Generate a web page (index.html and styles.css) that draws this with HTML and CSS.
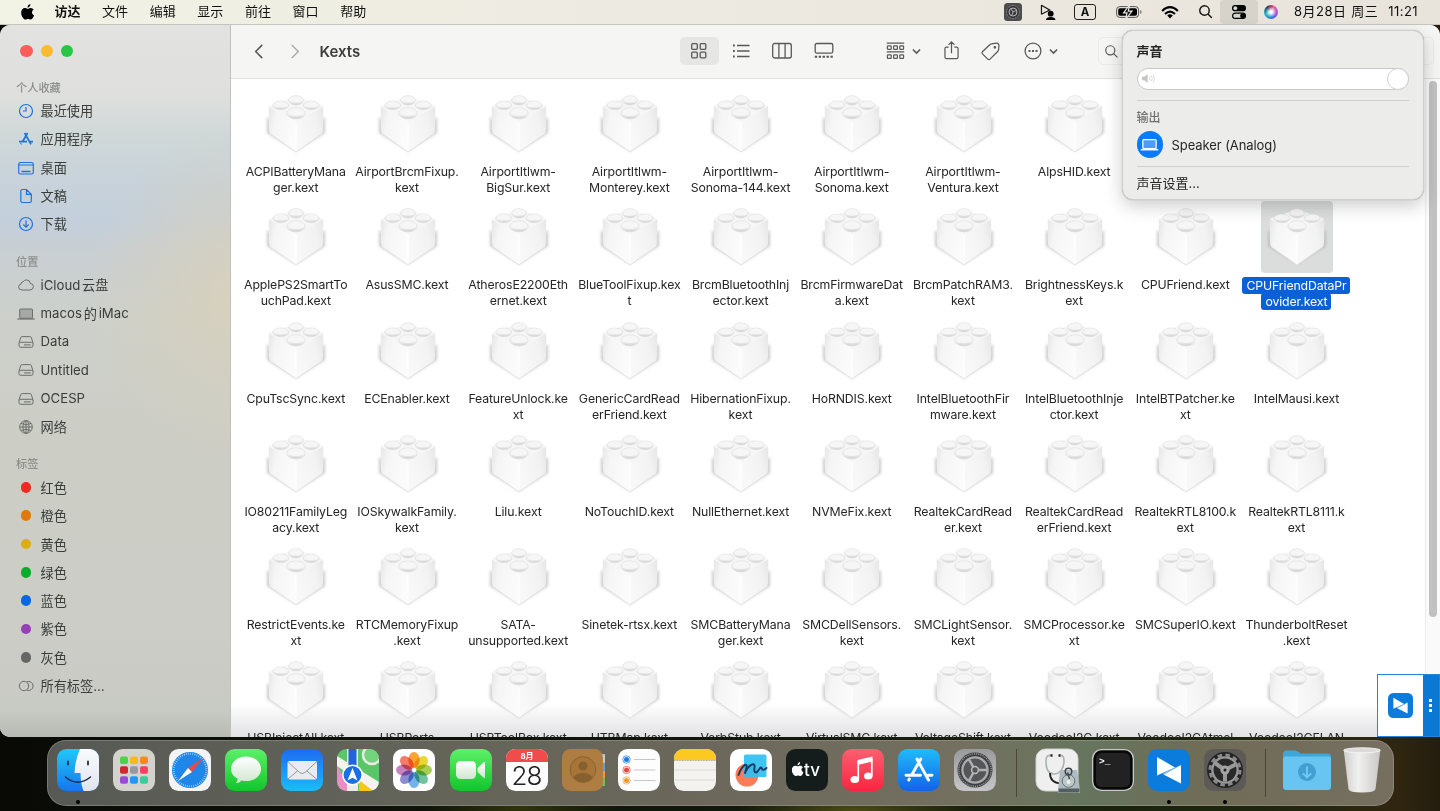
FILE: index.html
```html
<!DOCTYPE html>
<html lang="zh-CN">
<head>
<meta charset="utf-8">
<title>Kexts</title>
<link rel="stylesheet" href="styles.css">
</head>
<body>
<svg class="defs" width="0" height="0">
  <defs>
    <linearGradient id="bl" x1="0" x2="1" y2=".3"><stop offset="0" stop-color="#e6e6e6"/><stop offset=".3" stop-color="#f5f5f5"/><stop offset="1" stop-color="#fbfbfb"/></linearGradient>
    <linearGradient id="br" x1="1" x2="0" y2=".4"><stop offset="0" stop-color="#e6e6e6"/><stop offset=".35" stop-color="#f2f2f2"/><stop offset="1" stop-color="#f8f8f8"/></linearGradient>
    <linearGradient id="st" x2="0" y2="1"><stop offset="0" stop-color="#f4f4f4"/><stop offset=".6" stop-color="#f2f2f2"/><stop offset="1" stop-color="#cfcfcf"/></linearGradient>
    <filter id="soft" x="-20%" y="-20%" width="140%" height="140%"><feGaussianBlur stdDeviation="1.5"/></filter>
    <linearGradient id="gGreen" x2="0" y2="1"><stop offset="0" stop-color="#5df069"/><stop offset="1" stop-color="#12c52b"/></linearGradient>
    <linearGradient id="gBlue" x2="0" y2="1"><stop offset="0" stop-color="#1d6bf2"/><stop offset="1" stop-color="#1cbcf8"/></linearGradient>
    <linearGradient id="gStore" x2="0" y2="1"><stop offset="0" stop-color="#1fbcfb"/><stop offset="1" stop-color="#1263e8"/></linearGradient>
    <linearGradient id="gFind" x2="0" y2="1"><stop offset="0" stop-color="#1fc8fb"/><stop offset="1" stop-color="#1577ef"/></linearGradient>
    <linearGradient id="gFace" x2="0" y2="1"><stop offset="0" stop-color="#fbfbfd"/><stop offset="1" stop-color="#dfe4ee"/></linearGradient>
    <linearGradient id="gWhite" x2="0" y2="1"><stop offset="0" stop-color="#fff"/><stop offset="1" stop-color="#cfe6cf"/></linearGradient>
    <linearGradient id="gRed" x2="0" y2="1"><stop offset="0" stop-color="#fb5f71"/><stop offset="1" stop-color="#fa2540"/></linearGradient>
    <linearGradient id="gGrey" x2="0" y2="1"><stop offset="0" stop-color="#9a9a9c"/><stop offset="1" stop-color="#c6c6c8"/></linearGradient>
    <linearGradient id="gTrash"><stop offset="0" stop-color="#cfcfcd"/><stop offset=".4" stop-color="#f0f0ef"/><stop offset="1" stop-color="#c9c8c6"/></linearGradient>
    <clipPath id="tile"><rect width="42" height="42" rx="9.500"/></clipPath>
    <symbol id="brick" viewBox="-4 -4 64 66">
      <path d="M-1 22L28 42 57 22V38L28 56 -1 38Z" fill="#aaa" filter="url(#soft)" opacity=".6"/>
      <path d="M1 11.500Q1 10.500 2.500 10L28 1.500 53.500 10Q55 10.500 55 11.500L28 27Z" fill="#f6f6f6"/>
      <path d="M.8 11.500L28 26V57Q27 56.500 3 39.500Q1 38 .8 33Z" fill="url(#bl)"/>
      <path d="M55.200 11.500L28 26V57Q29 56.500 53 39.500Q55 38 55.200 33Z" fill="url(#br)"/>
      <path d="M28 27V55" stroke="#fff" stroke-width="1.400" opacity=".9"/>
      <path d="M3 39.500L28 57 53 39.500" fill="none" stroke="#dcdcdc" stroke-width=".8"/>
      <g fill="url(#st)" stroke="#dadada" stroke-width=".6"><ellipse cx="28" cy="5.300" rx="7.400" ry="4.600"/><ellipse cx="12.800" cy="10.300" rx="8" ry="4.300"/><ellipse cx="43.200" cy="10.300" rx="8" ry="4.300"/><ellipse cx="28" cy="18.300" rx="9.200" ry="5.500"/></g>
      <g fill="#f6f6f6"><ellipse cx="28" cy="4.400" rx="6.300" ry="3.200"/><ellipse cx="12.800" cy="9.400" rx="6.700" ry="2.900"/><ellipse cx="43.200" cy="9.400" rx="6.700" ry="2.900"/><ellipse cx="28" cy="17.200" rx="7.800" ry="3.800"/></g>
    </symbol>
    <symbol id="disk" viewBox="0 0 16 16"><path d="M4.200 2.600H11.800Q13 2.600 13.300 3.600L15 9V11.600Q15 13.300 13.400 13.300H2.600Q1 13.300 1 11.600V9L2.700 3.600Q3 2.600 4.200 2.600ZM1.200 9.200Q1.500 8.300 2.600 8.300H13.400Q14.500 8.300 14.800 9.200M6 10.900H12.700"/></symbol>
    <symbol id="apple" viewBox="0 0 14 17"><path d="M9.800 0C10 1.900 8.500 3.800 6.800 3.900 6.600 2.100 8.100.3 9.800 0ZM10 4.200C11.400 4.200 12.600 5 13.200 6 10.700 7.400 11.100 10.900 13.800 12 13.200 13.700 11.700 16.500 10.100 16.500 9 16.500 8.600 15.900 7.400 15.900S5.700 16.500 4.600 16.500C2.400 16.500 0 12.500 0 9.200 0 6.100 1.900 4.200 4 4.200 5.300 4.200 6.400 5 7.200 5S8.900 4.200 10 4.200Z"/></symbol>
    <symbol id="mag" viewBox="0 0 14 14"><circle cx="5.700" cy="5.700" r="4.900"/><path d="M9.300 9.300L13.400 13.400"/></symbol>
    <symbol id="chev" viewBox="0 0 8 6"><path d="M.8 1.200L4 4.400 7.200 1.200"/></symbol>
    <symbol id="todesk" viewBox="0 0 42 42"><rect width="42" height="42" rx="9" fill="#0b7bdc"/><path d="M9 8L27 18.500 9 26.500Z" fill="#fff"/><path d="M33 16V34.500L15.500 25.500Z" fill="#fff"/><path d="M15.500 25.500L33 16.200 27 18.500 15 24Z" fill="#8abcf0"/></symbol>
  </defs>
</svg>

<header class="menubar">
  <svg class="m-apple"><use href="#apple"/></svg>
  <nav class="menus"><b>访达</b><span>文件</span><span>编辑</span><span>显示</span><span>前往</span><span>窗口</span><span>帮助</span></nav>
  <div class="status">
    <svg class="s-app" viewBox="0 0 18 18"><rect width="18" height="18" rx="3.500" fill="#4d4d4f"/><circle cx="9" cy="9" r="6.500" fill="#3a3a3c" stroke="#8b8b8e" stroke-dasharray="1 .7"/><circle cx="9" cy="9" r="4" fill="none" stroke="#b5b5b5"/><path d="M9 9L12 7.500M9 9L7 6M9 9L8 12" stroke="#aaa"/></svg>
    <svg class="s-share" viewBox="0 0 17 17"><path d="M1.500 1V10.500M1.500 1.200L10 6.200 1.500 10.500" fill="none" stroke="#111" stroke-width="1.200"/><circle cx="11" cy="10" r="3"/><path d="M6 16.500Q6.500 13.400 11 13.400T16 16.500ZM14.500 7.500L16 6"/></svg>
    <span class="s-input">A</span>
    <svg class="s-batt" viewBox="0 0 26 14"><rect x=".6" y="1.600" width="22" height="10.800" rx="3.200" fill="none" stroke="#555" stroke-width="1"/><rect x="2.200" y="3.200" width="18.800" height="7.600" rx="1.800"/><path d="M24.300 5V9Q25.600 8.500 25.600 7T24.300 5Z" fill="#666"/><path d="M13.500 0L7.500 7.800H11L9.800 14 16 6.200H12.300Z" fill="#111" stroke="#ece9e0" stroke-width="1.200"/></svg>
    <svg class="s-wifi" viewBox="0 0 18 13"><g fill="none" stroke="#000" stroke-width="2"><path d="M1.100 4.900Q9-2.600 16.900 4.900M4 8Q9 3.200 14 8"/></g><path d="M6.200 9.500Q9 7.200 11.800 9.500L9 12.500Z"/></svg>
    <svg class="s-mag"><use href="#mag"/></svg>
    <span class="s-cc"><svg viewBox="0 0 14 14"><rect width="14" height="6.300" rx="3.150"/><circle cx="3.300" cy="3.150" r="1.900" fill="#dcd9d1"/><rect x=".6" y="8.100" width="12.800" height="5.300" rx="2.650" fill="none" stroke="#000" stroke-width="1.200"/><circle cx="10.800" cy="10.750" r="2.600"/></svg></span>
    <span class="s-siri"></span>
    <span class="clock">8月28日 周三&nbsp; 11:21</span>
  </div>
</header>

<main class="window">
  <aside class="sidebar">
    <div class="lights"><i></i><i></i><i></i></div>
    <h2>个人收藏</h2>
    <ul class="blue">
      <li><svg viewBox="0 0 16 16"><circle cx="8" cy="8" r="6.500"/><path d="M8 4V8H4.800"/></svg>最近使用</li>
      <li><svg viewBox="0 0 16 16"><path stroke-width="1.700" d="M9.600 2L4.300 11M6.600 2L13 13.400M1 10.700H9M11.800 10.700H15M2.800 13.300L3.300 12.500"/></svg>应用程序</li>
      <li><svg viewBox="0 0 16 16"><rect x=".7" y="2.500" width="14.600" height="11.500" rx="1.800"/><path d="M.7 5H15.300"/><path stroke-width="1.700" d="M3.500 11.500H12.500"/></svg>桌面</li>
      <li><svg viewBox="0 0 16 16"><path d="M4.300 1.500H8.500L13.300 6.300V13Q13.300 14.500 11.800 14.500H4.300Q2.800 14.500 2.800 13V3Q2.800 1.500 4.300 1.500ZM8.500 1.700V6.300H13"/></svg>文稿</li>
      <li><svg viewBox="0 0 16 16"><circle cx="8" cy="8" r="6.500"/><path d="M8 4.300V11M5.300 8.500L8 11.200 10.700 8.500"/></svg>下载</li>
    </ul>
    <h2>位置</h2>
    <ul>
      <li><svg viewBox="0 0 16 16"><path d="M4 13Q.5 12.800.6 9.800.8 7.400 3 7.100 3 4.900 5.100 4.900 6.300 2.800 8.700 2.900 12 3.200 12.200 6.300 15.300 6.600 15.400 9.700 15.200 12.800 12 13Z"/></svg>iCloud<span class="cj">云盘</span></li>
      <li><svg class="lap" viewBox="0 0 18 16"><rect x="2.700" y="3" width="12.800" height="9.300" rx="1" fill="#a5a8a4"/><path stroke-width="1.200" d="M.3 13H17.700"/></svg>macos<span class="cj">的</span><span class="cj">iMac</span></li>
      <li><svg><use href="#disk"/></svg>Data</li>
      <li><svg><use href="#disk"/></svg>Untitled</li>
      <li><svg><use href="#disk"/></svg>OCESP</li>
      <li><svg viewBox="0 0 16 16"><circle cx="8" cy="8" r="6.300"/><ellipse cx="8" cy="8" rx="3" ry="6.300"/><path d="M1.700 8H14.300M8 1.700V14.300M3 4.500Q8 6.800 13 4.500M3 11.500Q8 9.200 13 11.500"/></svg>网络</li>
    </ul>
    <h2>标签</h2>
    <ul>
      <li><i class="dot red"></i>红色</li>
      <li><i class="dot orange"></i>橙色</li>
      <li><i class="dot yellow"></i>黄色</li>
      <li><i class="dot green"></i>绿色</li>
      <li><i class="dot azure"></i>蓝色</li>
      <li><i class="dot purple"></i>紫色</li>
      <li><i class="dot grey"></i>灰色</li>
      <li><svg viewBox="0 0 16 16"><circle cx="6" cy="8" r="4.700"/><path d="M9 3.800A4.500 4.500 0 1 1 9 12.200"/></svg>所有标签…</li>
    </ul>
  </aside>

  <section class="content">
    <div class="toolbar">
      <svg class="back" viewBox="0 0 10 16"><path d="M8.500 1L1.500 8 8.500 15"/></svg>
      <svg class="fwd" viewBox="0 0 10 16"><path d="M1.500 1L8.500 8 1.500 15"/></svg>
      <h1>Kexts</h1>
      <div class="views">
        <span class="on"><svg viewBox="0 0 20 20"><rect x="2.700" y="2.700" width="5.600" height="5.600" rx="1"/><rect x="11.200" y="2.700" width="5.600" height="5.600" rx="1"/><rect x="2.700" y="11.200" width="5.600" height="5.600" rx="1"/><rect x="11.200" y="11.200" width="5.600" height="5.600" rx="1"/></svg></span>
        <span><svg viewBox="0 0 20 20"><path d="M6 4.500H18.500M6 10H18.500M6 15.500H18.500"/><path stroke-width="1.800" d="M2 4.500H3.800M2 10H3.800M2 15.500H3.800"/></svg></span>
        <span><svg viewBox="0 0 20 20"><rect x=".7" y="2.500" width="18.600" height="14.500" rx="2"/><path d="M6.900 2.500V17M13.100 2.500V17"/></svg></span>
        <span><svg viewBox="0 0 20 20"><rect x="1.200" y="2.500" width="17.600" height="9.600" rx="1.500"/><path stroke-width="2" stroke-dasharray="2.400 1.500" d="M.8 15.700H19.200"/></svg></span>
      </div>
      <svg class="group" viewBox="0 0 20 20"><path d="M.8 1.300H19.200M.8 10.500H19.200"/><g><rect x="1.500" y="4" width="4" height="3.800" rx=".8"/><rect x="8" y="4" width="4" height="3.800" rx=".8"/><rect x="14.500" y="4" width="4" height="3.800" rx=".8"/><rect x="1.500" y="13.500" width="4" height="3.800" rx=".8"/><rect x="8" y="13.500" width="4" height="3.800" rx=".8"/><rect x="14.500" y="13.500" width="4" height="3.800" rx=".8"/></g></svg>
      <svg class="chev c1"><use href="#chev"/></svg>
      <svg class="share" viewBox="0 0 16 20"><path d="M5 6.500H2.500Q1 6.500 1 8V17Q1 18.700 2.600 18.700H13.400Q15 18.700 15 17V8Q15 6.500 13.500 6.500H11M8 13V1M4.800 4L8 .9 11.200 4"/></svg>
      <svg class="tag" viewBox="0 0 20 20"><path d="M11 2L16 1.200Q18.800 1 18.900 4L18.500 8Q18.400 9 17.800 9.700L9.500 18Q8.300 19.200 7.100 18L1.500 12.500Q.5 11.400 1.500 10.200L9.500 2.700Q10 2.100 11 2Z"/><circle cx="14.600" cy="5.600" r=".8"/></svg>
      <svg class="more" viewBox="0 0 18 18"><circle cx="9" cy="9" r="7.900"/><path stroke-width="2" stroke-dasharray="2 1.500" d="M4.500 9H14"/></svg>
      <svg class="chev c2"><use href="#chev"/></svg>
      <span class="search"><svg><use href="#mag"/></svg></span>
    </div>
    <div class="body">
      <div class="grid">
        <figure><svg><use href="#brick"/></svg><p>ACPIBatteryMana<br>ger.kext</p></figure>
        <figure><svg><use href="#brick"/></svg><p>AirportBrcmFixup.<br>kext</p></figure>
        <figure><svg><use href="#brick"/></svg><p>AirportItlwm-<br>BigSur.kext</p></figure>
        <figure><svg><use href="#brick"/></svg><p>AirportItlwm-<br>Monterey.kext</p></figure>
        <figure><svg><use href="#brick"/></svg><p>AirportItlwm-<br>Sonoma-144.kext</p></figure>
        <figure><svg><use href="#brick"/></svg><p>AirportItlwm-<br>Sonoma.kext</p></figure>
        <figure><svg><use href="#brick"/></svg><p>AirportItlwm-<br>Ventura.kext</p></figure>
        <figure><svg><use href="#brick"/></svg><p>AlpsHID.kext</p></figure>
        <figure></figure>
        <figure></figure>
        <figure><svg><use href="#brick"/></svg><p>ApplePS2SmartTo<br>uchPad.kext</p></figure>
        <figure><svg><use href="#brick"/></svg><p>AsusSMC.kext</p></figure>
        <figure><svg><use href="#brick"/></svg><p>AtherosE2200Eth<br>ernet.kext</p></figure>
        <figure><svg><use href="#brick"/></svg><p>BlueToolFixup.kex<br>t</p></figure>
        <figure><svg><use href="#brick"/></svg><p>BrcmBluetoothInj<br>ector.kext</p></figure>
        <figure><svg><use href="#brick"/></svg><p>BrcmFirmwareDat<br>a.kext</p></figure>
        <figure><svg><use href="#brick"/></svg><p>BrcmPatchRAM3.<br>kext</p></figure>
        <figure><svg><use href="#brick"/></svg><p>BrightnessKeys.k<br>ext</p></figure>
        <figure><svg><use href="#brick"/></svg><p>CPUFriend.kext</p></figure>
        <figure class="sel"><svg><use href="#brick"/></svg><p><span>CPUFriendDataPr<br>ovider.kext</span></p></figure>
        <figure><svg><use href="#brick"/></svg><p>CpuTscSync.kext</p></figure>
        <figure><svg><use href="#brick"/></svg><p>ECEnabler.kext</p></figure>
        <figure><svg><use href="#brick"/></svg><p>FeatureUnlock.ke<br>xt</p></figure>
        <figure><svg><use href="#brick"/></svg><p>GenericCardRead<br>erFriend.kext</p></figure>
        <figure><svg><use href="#brick"/></svg><p>HibernationFixup.<br>kext</p></figure>
        <figure><svg><use href="#brick"/></svg><p>HoRNDIS.kext</p></figure>
        <figure><svg><use href="#brick"/></svg><p>IntelBluetoothFir<br>mware.kext</p></figure>
        <figure><svg><use href="#brick"/></svg><p>IntelBluetoothInje<br>ctor.kext</p></figure>
        <figure><svg><use href="#brick"/></svg><p>IntelBTPatcher.ke<br>xt</p></figure>
        <figure><svg><use href="#brick"/></svg><p>IntelMausi.kext</p></figure>
        <figure><svg><use href="#brick"/></svg><p>IO80211FamilyLeg<br>acy.kext</p></figure>
        <figure><svg><use href="#brick"/></svg><p>IOSkywalkFamily.<br>kext</p></figure>
        <figure><svg><use href="#brick"/></svg><p>Lilu.kext</p></figure>
        <figure><svg><use href="#brick"/></svg><p>NoTouchID.kext</p></figure>
        <figure><svg><use href="#brick"/></svg><p>NullEthernet.kext</p></figure>
        <figure><svg><use href="#brick"/></svg><p>NVMeFix.kext</p></figure>
        <figure><svg><use href="#brick"/></svg><p>RealtekCardRead<br>er.kext</p></figure>
        <figure><svg><use href="#brick"/></svg><p>RealtekCardRead<br>erFriend.kext</p></figure>
        <figure><svg><use href="#brick"/></svg><p>RealtekRTL8100.k<br>ext</p></figure>
        <figure><svg><use href="#brick"/></svg><p>RealtekRTL8111.k<br>ext</p></figure>
        <figure><svg><use href="#brick"/></svg><p>RestrictEvents.ke<br>xt</p></figure>
        <figure><svg><use href="#brick"/></svg><p>RTCMemoryFixup<br>.kext</p></figure>
        <figure><svg><use href="#brick"/></svg><p>SATA-<br>unsupported.kext</p></figure>
        <figure><svg><use href="#brick"/></svg><p>Sinetek-rtsx.kext</p></figure>
        <figure><svg><use href="#brick"/></svg><p>SMCBatteryMana<br>ger.kext</p></figure>
        <figure><svg><use href="#brick"/></svg><p>SMCDellSensors.<br>kext</p></figure>
        <figure><svg><use href="#brick"/></svg><p>SMCLightSensor.<br>kext</p></figure>
        <figure><svg><use href="#brick"/></svg><p>SMCProcessor.ke<br>xt</p></figure>
        <figure><svg><use href="#brick"/></svg><p>SMCSuperIO.kext</p></figure>
        <figure><svg><use href="#brick"/></svg><p>ThunderboltReset<br>.kext</p></figure>
        <figure><svg><use href="#brick"/></svg><p>USBInjectAll.kext</p></figure>
        <figure><svg><use href="#brick"/></svg><p>USBPorts</p></figure>
        <figure><svg><use href="#brick"/></svg><p>USBToolBox.kext</p></figure>
        <figure><svg><use href="#brick"/></svg><p>UTBMap.kext</p></figure>
        <figure><svg><use href="#brick"/></svg><p>VerbStub.kext</p></figure>
        <figure><svg><use href="#brick"/></svg><p>VirtualSMC.kext</p></figure>
        <figure><svg><use href="#brick"/></svg><p>VoltageShift.kext</p></figure>
        <figure><svg><use href="#brick"/></svg><p>VoodooI2C.kext</p></figure>
        <figure><svg><use href="#brick"/></svg><p>VoodooI2CAtmel</p></figure>
        <figure><svg><use href="#brick"/></svg><p>VoodooI2CELAN</p></figure>
      </div>
      <div class="scroll"><i></i></div>
    </div>
  </section>
</main>

<section class="popup">
  <h3>声音</h3>
  <div class="slider"><svg viewBox="0 0 16 12"><path d="M1 4H3.500L7 1V11L3.500 8H1Z" fill="#c4c4c4"/><path d="M9 4Q10.500 6 9 8M11 2.700Q13.300 6 11 9.300M13 1.400Q16 6 13 10.600" fill="none" stroke="#d6d6d6"/></svg><i></i></div>
  <hr>
  <h4>输出</h4>
  <div class="device"><span><svg viewBox="0 0 20 14"><rect x="3" y="1.500" width="14" height="9.500" rx="1" fill="#4b9dff" stroke="#fff" stroke-width="1.300"/><path d="M.8 12.200H19.200" stroke="#fff" stroke-width="1.600"/></svg></span>Speaker (Analog)</div>
  <hr>
  <p>声音设置…</p>
</section>

<div class="widget"><div><svg><use href="#todesk"/></svg></div><span><i></i><i></i><i></i></span></div>

<footer class="dock">
  <div class="app run"><svg viewBox="0 0 42 42"><g clip-path="url(#tile)"><rect width="42" height="42" fill="url(#gFind)"/><path d="M23 0Q18 11 17.500 24H23.500Q23.500 34 26.500 42H42V0Z" fill="url(#gFace)"/></g><path d="M11 12.500V15.500M31 12.500V15.500" stroke="#1c2c44" stroke-width="1.800" stroke-linecap="round"/><path d="M8.500 28Q20.500 38.500 33.500 28" fill="none" stroke="#1c2c44" stroke-width="1.500" stroke-linecap="round"/></svg></div>
  <div class="app"><svg viewBox="0 0 42 42"><rect width="42" height="42" rx="9.500" fill="#d3d2cd"/><g><rect x="7" y="7.500" width="8" height="7.500" rx="2" fill="#4fd04b"/><rect x="17" y="7.500" width="8" height="7.500" rx="2" fill="#fbb912"/><rect x="27" y="7.500" width="8" height="7.500" rx="2" fill="#fb8a1c"/><rect x="7" y="17.300" width="8" height="7.500" rx="2" fill="#cf2730"/><rect x="17" y="17.300" width="8" height="7.500" rx="2" fill="#989b9d"/><rect x="27" y="17.300" width="8" height="7.500" rx="2" fill="#fb4162"/><rect x="7" y="27.300" width="8" height="7.500" rx="2" fill="#9a4bd6"/><rect x="17" y="27.300" width="8" height="7.500" rx="2" fill="#2396f5"/><rect x="27" y="27.300" width="8" height="7.500" rx="2" fill="#3acb9c"/></g></svg></div>
  <div class="app"><svg viewBox="0 0 42 42"><rect width="42" height="42" rx="9.500" fill="#f4f4f4"/><circle cx="21" cy="21" r="18" fill="#1f86ea"/><circle cx="21" cy="21" r="16.300" fill="none" stroke="#b6defc" stroke-width="2" stroke-dasharray=".7 1.430"/><path d="M34 9L23 23 19 19Z" fill="#f0473f"/><path d="M9 32L19 19 23 23Z" fill="#fff"/></svg></div>
  <div class="app"><svg viewBox="0 0 42 42"><rect width="42" height="42" rx="9.500" fill="url(#gGreen)"/><path d="M21 7.500C29.500 7.500 36 13 36 20S29.500 32 21 32Q18.800 32 16.500 31.400 14 34.300 10.800 34 12.800 32 12.600 29.600C8.500 27.500 6 24 6 20 6 13 12.500 7.500 21 7.500Z" fill="url(#gWhite)"/></svg></div>
  <div class="app"><svg viewBox="0 0 42 42"><rect width="42" height="42" rx="9.500" fill="url(#gBlue)"/><rect x="6.500" y="12" width="29.500" height="18.500" rx="2" fill="#e9ecef"/><path d="M7 12.800L18.500 23.500Q21.200 25.500 24 23.500L35.500 12.800M7 30L16.800 21.700M35.500 30L25.500 21.700" fill="none" stroke="#9098a0" stroke-width="1"/></svg></div>
  <div class="app"><svg viewBox="0 0 42 42"><g clip-path="url(#tile)"><rect width="42" height="42" fill="#5ac667"/><path d="M0 16V42H14Z" fill="#e58fc4"/><path d="M0 7L42 33V42H36L0 17Z" fill="#f3f2ee"/><path d="M10 0H21V42H10Z" fill="#eceae5"/><path d="M11.500 0H19.500V22H11.500Z" fill="#2065d8"/><path d="M22 31L36 42H22Z" fill="#fbc416"/><circle cx="35" cy="6" r="9" fill="#74d37d" stroke="#e8ece6" stroke-width="2.500"/><circle cx="15.500" cy="26" r="9.700" fill="#1b6fe4" stroke="#fff" stroke-width="1.500"/><path d="M15.500 19L20.500 31.500 15.500 28.700 10.500 31.500Z" fill="#fff"/></g></svg></div>
  <div class="app"><svg viewBox="0 0 42 42"><rect width="42" height="42" rx="9.500" fill="#fff"/><g class="petals"><ellipse cx="21" cy="11" rx="5.600" ry="8" fill="#fb9416"/><ellipse cx="21" cy="11" rx="5.600" ry="8" fill="#e6cf10" transform="rotate(45 21 21)"/><ellipse cx="21" cy="11" rx="5.600" ry="8" fill="#98c635" transform="rotate(90 21 21)"/><ellipse cx="21" cy="11" rx="5.600" ry="8" fill="#55ba8c" transform="rotate(135 21 21)"/><ellipse cx="21" cy="11" rx="5.600" ry="8" fill="#5aa6e4" transform="rotate(180 21 21)"/><ellipse cx="21" cy="11" rx="5.600" ry="8" fill="#7a78c8" transform="rotate(225 21 21)"/><ellipse cx="21" cy="11" rx="5.600" ry="8" fill="#bd6cb4" transform="rotate(270 21 21)"/><ellipse cx="21" cy="11" rx="5.600" ry="8" fill="#f26250" transform="rotate(315 21 21)"/></g></svg></div>
  <div class="app"><svg viewBox="0 0 42 42"><rect width="42" height="42" rx="9.500" fill="url(#gGreen)"/><rect x="6" y="12" width="20" height="18" rx="4.500" fill="url(#gWhite)"/><path d="M27.500 19L34 13Q35 12.500 35 14V28Q35 29.500 34 29L27.500 23Z" fill="url(#gWhite)"/></svg></div>
  <div class="app"><svg viewBox="0 0 42 42"><g clip-path="url(#tile)"><rect width="42" height="42" fill="#fdfdfd"/><rect width="42" height="13" fill="#f14b4b"/></g><text x="21" y="10" class="cal-m">8月</text><text x="20.500" y="35.500" class="cal-d">28</text></svg></div>
  <div class="app"><svg viewBox="0 0 42 42"><rect x="34" y="5" width="9" height="9" rx="1" fill="#c9c9c9"/><rect x="34" y="14" width="9" height="8" fill="#56a7d8"/><rect x="34" y="22" width="9" height="7" fill="#f09a38"/><rect x="34" y="29" width="9" height="8" rx="1" fill="#67c75b"/><rect width="41" height="42" rx="8.500" fill="#ad7d42"/><circle cx="21" cy="20.500" r="12.800" fill="#a87539" stroke="#86602f" stroke-width=".9"/><circle cx="21" cy="17" r="4.600" fill="#86612f"/><path d="M11.500 29Q13.500 24 21 24T30.500 29Q26.500 33.200 21 33.200T11.500 29Z" fill="#86612f"/></svg></div>
  <div class="app"><svg viewBox="0 0 42 42"><rect width="42" height="42" rx="9.500" fill="#fdfdfd"/><g stroke="#b9b9b9" stroke-width=".8"><path d="M16 10.500H37.500M16 21H37.500M16 31.500H37.500"/></g><circle cx="8.500" cy="10.500" r="2.500" fill="#1977f2"/><circle cx="8.500" cy="21" r="2.500" fill="#ea4745"/><circle cx="8.500" cy="31.500" r="2.500" fill="#f19a29"/><g fill="none" stroke-width=".7"><circle cx="8.500" cy="10.500" r="3.700" stroke="#1977f2"/><circle cx="8.500" cy="21" r="3.700" stroke="#ea4745"/><circle cx="8.500" cy="31.500" r="3.700" stroke="#f19a29"/></g></svg></div>
  <div class="app"><svg viewBox="0 0 42 42"><g clip-path="url(#tile)"><rect width="42" height="42" fill="#f3f2ee"/><rect width="42" height="11" fill="#fcc922"/><path d="M0 11.500H42" stroke="#b5a980" stroke-dasharray="1 .6"/><path d="M0 21H42M0 31H42" stroke="#d6d5d1" stroke-width=".8"/></g></svg></div>
  <div class="app"><svg viewBox="0 0 42 42"><rect width="42" height="42" rx="9.500" fill="#fff"/><circle cx="17" cy="26" r="11.500" fill="#fa7b55"/><rect x="14" y="5.500" width="22.500" height="22.500" rx="1.500" fill="#2fc0f0" opacity=".92"/><path d="M8.500 26C12 16 17.500 13 16.500 18.500L15 24C19 15 25.500 12.500 24.500 18.500 23.500 23.500 26 25.500 29 20.500 31 17.500 31.500 18.500 32 20 33 21.500 35 20.500 36.500 19" fill="none" stroke="#183a66" stroke-width="1.900" stroke-linecap="round" stroke-linejoin="round"/></svg></div>
  <div class="app"><svg viewBox="0 0 42 42"><rect width="42" height="42" rx="9.500" fill="#141d1c"/><svg x="5.800" y="13" width="11.800" height="14.500" fill="#fff"><use href="#apple"/></svg><text x="18" y="27" class="tv">tv</text></svg></div>
  <div class="app"><svg viewBox="0 0 42 42"><rect width="42" height="42" rx="9.500" fill="url(#gRed)"/><path d="M15.500 11L30.500 7.500V12.500L15.500 16Z" fill="#fff"/><path d="M16.300 12V30M29.800 10V26.500" stroke="#fff" stroke-width="1.700"/><ellipse cx="12.800" cy="30.500" rx="4.300" ry="3.500" fill="#fff"/><ellipse cx="26.300" cy="27" rx="4.300" ry="3.500" fill="#fff"/></svg></div>
  <div class="app"><svg viewBox="0 0 42 42"><rect width="42" height="42" rx="9.500" fill="url(#gStore)"/><path d="M22.800 10L13.500 26.300M19 10L30.500 31M8 26.300H22.500M30 26.300H34M11.300 30L10.800 31" stroke="#fff" stroke-width="2.900" stroke-linecap="round"/></svg></div>
  <div class="app"><svg viewBox="0 0 42 42"><rect width="42" height="42" rx="9.500" fill="url(#gGrey)"/><circle cx="21" cy="21" r="17.500" fill="#3f4042"/><circle cx="21" cy="21" r="16.200" fill="none" stroke="#919294" stroke-width="1.400" stroke-dasharray="1.200 1"/><circle cx="21" cy="21" r="12.600" fill="#55565a" stroke="#aaacae" stroke-width="2.300"/><path d="M21 21L33 21M21 21L15 10.500M21 21L15 31.500" stroke="#b0b1b3" stroke-width="2.500"/><circle cx="21" cy="21" r="3.400" fill="#55565a" stroke="#bbb" stroke-width="1.500"/></svg></div>
  <div class="sep"></div>
  <div class="app"><svg viewBox="0 0 42 42"><rect width="42" height="42" rx="9.500" fill="#efefef" stroke="#d0d0d0"/><path d="M15 6.500Q10 5.500 10 12C10 19 12 25 18 25S28 19 28 12Q28 5.500 23.500 6.500" fill="none" stroke="#adb1b1" stroke-width="1.600"/><path d="M14.500 6.500H16.500M22.500 6.500H24.500" stroke="#222" stroke-width="2.500"/><path d="M14 24Q14 34 25 34.500" fill="none" stroke="#222" stroke-width="1.800"/><path d="M24 21H41L44 41V44H22V41Z" fill="#aebbc0"/><path d="M22.500 39.500H43.500V43.500H22.500Z" fill="#555d61"/><circle cx="32.500" cy="32" r="6.300" fill="#bec8cb" stroke="#697377"/><circle cx="32.500" cy="33" r="2" fill="#eee"/><circle cx="32.500" cy="22.500" r="3.300" fill="none" stroke="#3c4245" stroke-width="1.400"/><path d="M31.500 23.500L33.500 30" stroke="#3c4245" fill="none" stroke-width="1.400"/></svg></div>
  <div class="app"><svg viewBox="0 0 42 42"><rect width="42" height="42" rx="9.500" fill="#c9c9c9"/><rect x="1.300" y="1.300" width="39.400" height="39.400" rx="8.500" fill="#080808"/><rect x="4" y="4" width="34" height="34" rx="5.500" fill="#222"/><text x="7" y="14.500" class="term">&gt;_</text></svg></div>
  <div class="app run"><svg><use href="#todesk"/></svg></div>
  <div class="app run"><svg viewBox="0 0 42 42"><rect width="42" height="42" rx="9.500" fill="#5d5957"/><circle cx="21" cy="21" r="18" fill="#242424"/><circle cx="21" cy="21" r="13.800" fill="#999" /><circle cx="21" cy="21" r="15" fill="none" stroke="#8a8a8a" stroke-width="3" stroke-dasharray="4.500 3.350"/><circle cx="21" cy="21" r="11.500" fill="#292929"/><path d="M21 21L31.500 15.500M21 21L11 14M21 21L21 32.500" stroke="#9a9a9a" stroke-width="4"/><circle cx="21" cy="21" r="4.600" fill="#a4a4a4"/><circle cx="21" cy="21" r="1.500" fill="#222"/></svg></div>
  <div class="sep"></div>
  <div class="app"><svg class="wide" viewBox="0 0 48 42"><path d="M0 5Q0 1.500 3.500 1.500H12Q14 1.500 15.500 3L17.500 4.500H44.500Q48 4.500 48 8V20H0Z" fill="#3da7d9"/><path d="M0 10Q0 7.500 2.500 7.500H45.500Q48 7.500 48 10V37.500Q48 41 44.500 41H3.500Q0 41 0 37.500Z" fill="#68c5f1"/><circle cx="24" cy="23" r="9" fill="#419fd1"/><path d="M24 17.500V28M19.800 24.300L24 28.500 28.200 24.300" fill="none" stroke="#71c8ef" stroke-width="1.900"/></svg></div>
  <div class="app"><svg class="bin" viewBox="0 0 38 46"><path d="M.7 3L5.500 42Q6 45.500 19 45.500T32.500 42L37.300 3Z" fill="url(#gTrash)"/><ellipse cx="19" cy="3.300" rx="18.300" ry="2.500" fill="#dbdad8" stroke="#f5f5f4" stroke-width=".9"/></svg></div>
</footer>
</body>
</html>
```
FILE: styles.css
```css
* { box-sizing: border-box; }
body {
  margin: 0; width: 1440px; height: 811px; overflow: hidden; position: relative;
  font-family: Inter, "Noto Sans CJK SC", sans-serif; color: #262626;
  background: radial-gradient(ellipse 100px 16px at 520px 808px, #303509, transparent), radial-gradient(ellipse 120px 18px at 855px 810px, #4b4c13, transparent), linear-gradient(90deg, #090a06 0, #11170b 50%, #1e250e 88%, #302610 97%, #241e0e);
}
h1, h2, h3, h4, p, ul, figure { margin: 0; padding: 0; font-weight: 400; }
ul { list-style: none; }
svg { display: block; overflow: visible; flex: none; }
.defs { position: absolute; }

.menubar { height: 25px; display: flex; align-items: center; padding-left: 20.500px; background: linear-gradient(90deg, #f2f2e5, #edeae1 45%, #e8e4dc); border-bottom: 1px solid #c5c4bd; font-size: 13px; color: #111; }
.m-apple { width: 13.500px; height: 16px; }
.menus { display: flex; gap: 21.600px; margin-left: 20.500px; line-height: 23px; height: 24px; }
.menus b { font-weight: 700; }
.status { margin-left: auto; display: flex; align-items: center; height: 24px; }
.s-app { width: 18px; height: 18px; }
.s-share { width: 16.500px; height: 16.500px; margin-left: 18px; }
.s-input { margin-left: 18px; width: 22px; height: 16px; border: 1.300px solid #222; border-radius: 3px; font-size: 11.500px; line-height: 14px; font-weight: 700; text-align: center; }
.s-batt { width: 26px; height: 14px; margin-left: 20px; }
.s-wifi { width: 18px; height: 13px; margin-left: 19px; }
.s-mag { width: 13.500px; height: 13.500px; margin-left: 19.500px; fill: none; stroke: #111; stroke-width: 1.500; }
.s-cc { width: 38px; height: 24px; margin-left: 8px; border-radius: 4px; background: #d6d3cb; display: grid; place-items: center; }
.s-cc svg { width: 14px; height: 14px; }
.s-siri { width: 14px; height: 14px; margin-left: 6px; border-radius: 50%; background: radial-gradient(circle, #fff 0 12%, transparent 55%), conic-gradient(from 20deg, #e563a0, #a24fdd 90deg, #2c78dd 150deg, #24b5c4 230deg, #2b405e 300deg, #e74668); }
.clock { margin-left: 16px; width: 146px; letter-spacing: .48px; word-spacing: .8px; white-space: nowrap; line-height: 23px; height: 24px; }

.window { height: 712px; display: flex; border-radius: 10px; overflow: hidden; background: #fff; }
.sidebar { width: 231px; border-right: 1px solid #bfc1be; flex: none;
  background: linear-gradient(0deg, rgba(160,162,155,.4), transparent 26px), radial-gradient(ellipse 150px 170px at 240px 270px, rgba(217,209,187,.9) 0, rgba(214,208,190,.6) 45%, transparent), linear-gradient(180deg, #e2e2e0 0, #dfe0de 68px, #d0d8d8 108px, #c8d3da 150px, #c3cfdb 195px, #c9cfd2 230px, #cdd0ca 300px, #cccdc5 420px, #cccdc6 600px, #c7c9c3); }
.lights { display: flex; gap: 8px; padding: 20px 0 0 20.200px; height: 39.300px; }
.lights i { width: 12.400px; height: 12.400px; border-radius: 50%; background: #fb5d58; }
.lights i:nth-child(2) { background: #fbba2f; }
.lights i:nth-child(3) { background: #2bc544; }
.sidebar h2 { height: 32.600px; padding: 14.300px 0 0 16px; font-size: 11.200px; line-height: 18px; font-weight: 500; color: #8b8e8b; }
.sidebar li { height: 28.330px; display: flex; align-items: center; padding: 0 0 1px 18px; font-size: 13.200px; color: #3a3d3a; white-space: nowrap; }
.sidebar li svg { width: 16px; height: 16px; margin-right: 6.500px; fill: none; stroke: #6c6e6a; stroke-width: 1; position: relative; top: .5px; }
.sidebar li svg.lap { width: 18px; margin: 0 5.500px 0 -1px; }
.sidebar .blue svg { stroke: #1d72e3; stroke-width: 1.200; }
.cj { margin-left: 1.800px; }
.dot { width: 10.400px; height: 10.400px; border-radius: 50%; margin: 0 9.300px 0 2.800px; }
.red { background: #ee2a22; } .orange { background: #dd7a0b; } .yellow { background: #dcae0b; } .green { background: #09ad2b; }
.azure { background: #0767e4; } .purple { background: #953fb8; } .grey { background: #666765; }

.content { flex: 1; display: flex; flex-direction: column; min-width: 0; }
.toolbar { height: 53.500px; flex: none; display: flex; align-items: center; padding-left: 23px; background: #f5f5f3; border-bottom: 1px solid #e0e0df; }
.toolbar svg { fill: none; stroke: #595959; stroke-width: 1.300; }
.back, .fwd { width: 10px; height: 15px; }
.toolbar .back { stroke-width: 1.700; }
.toolbar .fwd { margin-left: 26px; stroke: #aaa; stroke-width: 1.500; }
.toolbar h1 { width: 360px; margin-left: 19.500px; font-size: 15px; font-weight: 600; color: #3d3d3d; }
.views { display: flex; gap: 2px; }
.views span { width: 39.500px; height: 28px; border-radius: 5px; display: grid; place-items: center; }
.views .on { background: #e6e6e5; }
.views svg { width: 20px; height: 20px; }
.group { width: 19px; height: 19px; margin-left: 42.500px; }
.toolbar .chev { width: 9px; height: 7px; stroke-width: 1.400; }
.c1 { margin-left: 7px; }
.share { width: 15px; height: 19px; margin-left: 22.500px; margin-top: -2px; }
.tag { width: 19px; height: 19px; margin-left: 22.500px; }
.more { width: 18px; height: 18px; margin-left: 24px; }
.c2 { margin-left: 7px; }
.search { flex: 1; margin: 0 6px 0 39.500px; height: 28px; padding: 7px 6px; border: 1px solid #ebebea; border-radius: 5px; }
.search svg { width: 13px; height: 13px; }
.body { flex: 1; min-height: 0; display: flex; background: linear-gradient(0deg, rgba(120,120,130,.22), transparent 34px), #fff; }
.grid { width: 1194px; padding: 9.500px 0 0 9.200px; display: grid; grid-template-columns: repeat(10, 111.200px); grid-auto-rows: 113.250px; flex: none; }
figure { display: flex; flex-direction: column; align-items: center; }
figure > svg { width: 72px; height: 72px; padding: 3px 4px 3px; border-radius: 4px; margin-left: 1.400px; }
figure p { margin-top: 4px; font-size: 12.300px; line-height: 16px; text-align: center; white-space: nowrap; letter-spacing: -.13px; }
.sel > svg { background: #dbdcdc; }
.sel span { background: #0b60d8; color: #fff; padding: .5px 4px 1.500px; border-radius: 3px; box-decoration-break: clone; -webkit-box-decoration-break: clone; }
.scroll { width: 15px; background: #fafafa; border-left: 1px solid #ececec; padding: 2px 0 0 3px; }
.scroll i { display: block; width: 8px; height: 536px; border-radius: 4px; background: #c1c1c1; }

.popup { position: absolute; left: 1122px; top: 30px; width: 302px; height: 169.500px; padding: 11px 14px 0 13.500px; border-radius: 11px; border: 1px solid #cfcfcd; background: #ececea; box-shadow: 0 0 1px rgba(0,0,0,.3), 0 6px 18px rgba(0,0,0,.2); }
.popup h3 { font-size: 13px; line-height: 18px; font-weight: 700; }
.slider { margin-top: 7.500px; height: 22px; border-radius: 11px; background: #fff; border: 1px solid #c9c9c8; display: flex; align-items: center; justify-content: space-between; padding-left: 3px; }
.slider svg { width: 15px; height: 11px; }
.slider i { width: 22px; height: 22px; margin-right: -1px; border-radius: 50%; border: 1px solid #cfcfcf; background: #fff; }
.popup hr { border: 0; height: 1px; background: #d0d0ce; margin: 10px 0 0; }
.popup h4 { font-size: 12px; line-height: 18px; margin-top: 8px; font-weight: 500; color: #717171; }
.device { display: flex; align-items: center; gap: 8.500px; margin-top: 4.500px; font-size: 13px; height: 27px; letter-spacing: -.08px; }
.device span { width: 26.500px; height: 26.500px; border-radius: 50%; background: #0a7aff; display: grid; place-items: center; }
.device svg { width: 19px; height: 13.500px; }
.popup hr + p { margin-top: 6.500px; font-size: 13px; line-height: 18px; }
.device + hr { margin-top: 8px; }

.widget { position: absolute; left: 1377px; top: 674px; width: 63px; height: 63px; border: 1px solid #2585d8; background: #fff; display: flex; }
.widget div { flex: 1; display: grid; place-items: center; }
.widget svg { width: 25px; height: 25px; }
.widget span { width: 16.500px; background: #0b78d4; display: flex; flex-direction: column; gap: 2.500px; align-items: center; justify-content: center; }
.widget i { width: 2.600px; height: 2.600px; background: #fff; }

.dock { position: absolute; left: 47px; top: 740px; width: 1346.500px; height: 66px; padding-left: 2.800px; border-radius: 19px; display: flex; background: linear-gradient(90deg, #575954, #626359 25%, #6c685b 50%, #747060 68%, #66755e 77%, #6f6c57 86%, #766f60); box-shadow: inset 0 0 0 1px rgba(190,190,180,.32); }
.app { width: 56.100px; flex: none; padding-top: 9px; display: flex; flex-direction: column; align-items: center; }
.app > svg { width: 42px; height: 42px; }
.app > svg.wide { width: 48px; }
.app > svg.bin { width: 38px; height: 46px; margin: -2px 2px 0 0; }
.petals ellipse { mix-blend-mode: multiply; opacity: .85; }
.run::after { content: ""; width: 4px; height: 4px; margin-top: 9px; border-radius: 50%; background: #000; }
.sep { width: 25.400px; flex: none; height: 48px; margin-top: 9px; background: linear-gradient(#484638, #484638) center / 1px 100% no-repeat; }
.cal-m { font: 700 8px Inter, "Noto Sans CJK SC", sans-serif; fill: #fff; text-anchor: middle; }
.cal-d { font: 300 26px Inter, sans-serif; fill: #222; text-anchor: middle; letter-spacing: -1px; }
.tv { font: 500 17px Inter, sans-serif; fill: #fff; }
.term { font: 700 9.500px "Liberation Mono", monospace; fill: #fff; }
```
